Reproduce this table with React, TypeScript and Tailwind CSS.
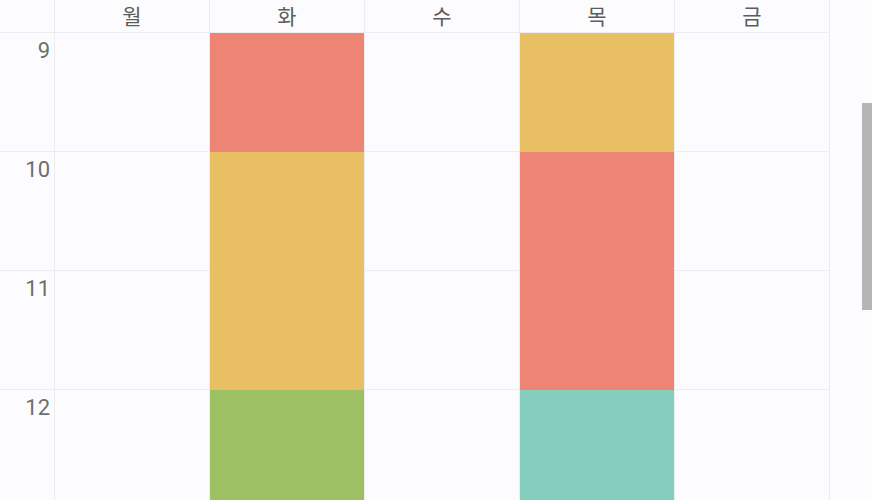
import React from "react";

type Slot = { span: number; color?: string };

const days: { name: string; slots: Slot[] }[] = [
  { name: "월", slots: [{ span: 1 }, { span: 1 }, { span: 1 }, { span: 1 }] },
  {
    name: "화",
    slots: [
      { span: 1, color: "bg-[#ee8474]" },
      { span: 2, color: "bg-[#e8bf62]" },
      { span: 1, color: "bg-[#9dc063]" },
    ],
  },
  { name: "수", slots: [{ span: 1 }, { span: 1 }, { span: 1 }, { span: 1 }] },
  {
    name: "목",
    slots: [
      { span: 1, color: "bg-[#e8bf62]" },
      { span: 2, color: "bg-[#ee8474]" },
      { span: 1, color: "bg-[#85cdbd]" },
    ],
  },
  { name: "금", slots: [{ span: 1 }, { span: 1 }, { span: 1 }, { span: 1 }] },
];

const hours = [9, 10, 11, 12];

export default function App() {
  return (
    <div className="relative w-[872px] h-[500px] overflow-hidden bg-[#fcfcfe] font-['Roboto','Noto_Sans_CJK_KR',sans-serif]">
      <div className="flex">
        {/* time column */}
        <div className="w-[55px] shrink-0 border-r border-[#ececf1]">
          <div className="h-[33px] border-b border-[#ececf1]" />
          {hours.map((h) => (
            <div
              key={h}
              className="h-[119px] border-b border-[#ececf1] pr-[4px] pt-[5px] text-right text-[22px] leading-[26px] text-[#6e6e6e]">
              {h}
            </div>
          ))}
        </div>

        {days.map((day) => (
          <div key={day.name} className="w-[155px] shrink-0 border-r border-[#ececf1]">
            <div className="h-[33px] border-b border-[#ececf1] flex items-center justify-center pb-[1px] text-[21px] text-[#5c5c5c] font-['Noto_Sans_CJK_KR',sans-serif]">
              {day.name}
            </div>
            {day.slots.map((s, i) =>
              s.color ? (
                <div
                  key={i}
                  className={`${s.color} ${s.span === 2 ? "h-[238px]" : "h-[119px]"}`}
                />
              ) : (
                <div key={i} className="h-[119px] border-b border-[#ececf1]" />
              )
            )}
          </div>
        ))}
      </div>

      {/* scroll indicator */}
      <div className="absolute left-[862px] top-[103px] w-[10px] h-[207px] bg-[#b5b5b5]" />
    </div>
  );
}
